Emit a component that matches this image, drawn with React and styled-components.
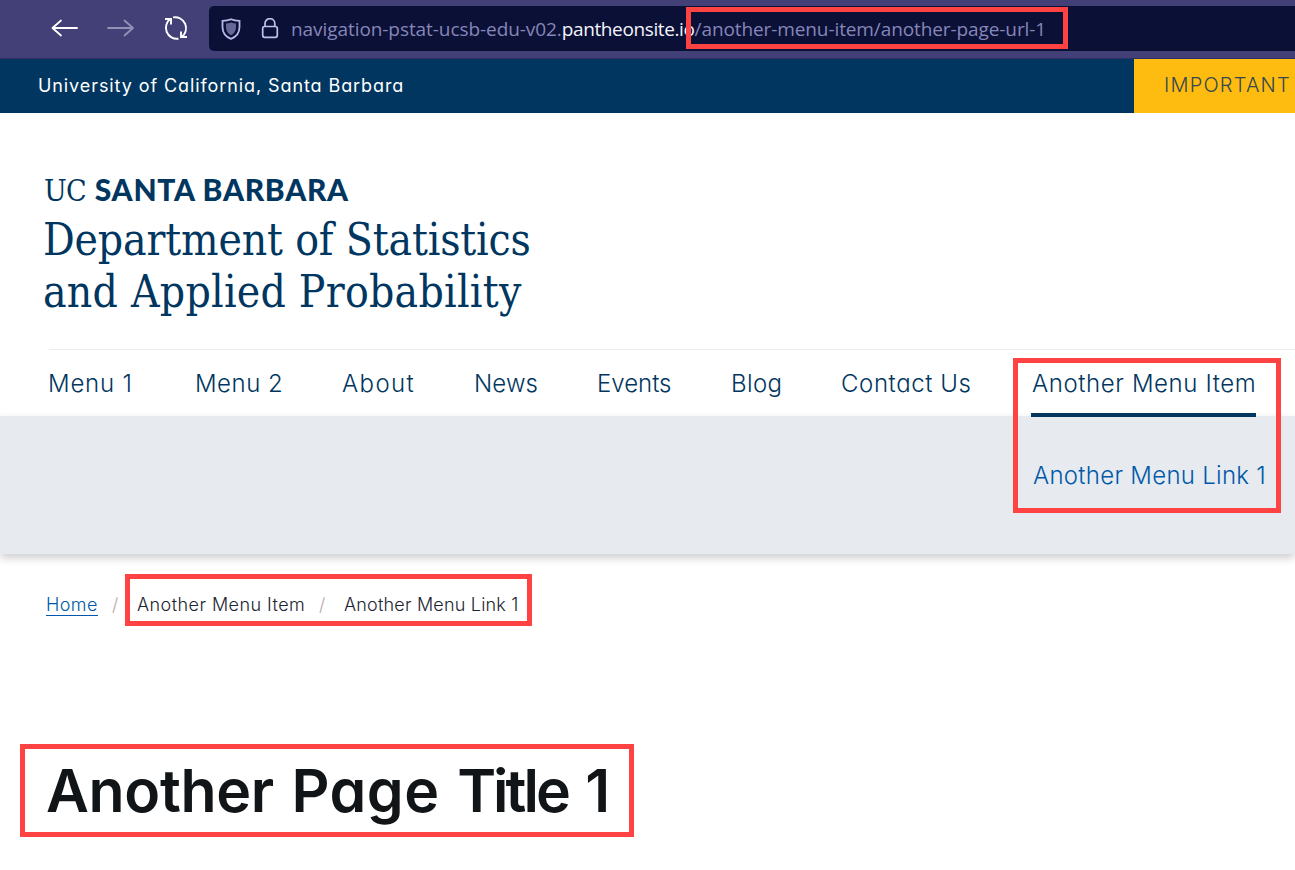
import React from "react";
import styled, { createGlobalStyle } from "styled-components";

const navy = "#003660";

const GlobalStyle = createGlobalStyle`
  * { box-sizing: border-box; }
  body {
    margin: 0;
    background: #fff;
    font-family: Inter, "Liberation Sans", sans-serif;
    font-feature-settings: "cv11";
    font-weight: 300;
    color: ${navy};
    overflow: hidden;
  }
  a { color: inherit; text-decoration: none; }
`;

const Page = styled.div`
  position: relative;
  width: 1295px;
  height: 870px;
  overflow: hidden;
`;

const BrowserBar = styled.div`
  display: flex;
  height: 59px;
  padding: 6px 0 0 51px;
  background: #424077;
  border-bottom: 1px solid #322f68;
`;

const Controls = styled.div`
  display: flex;
  width: 158px;
  height: 44px;
  align-items: center;
  gap: 28px;
  flex: none;
`;

const AddressBar = styled.div`
  display: flex;
  flex: 1;
  align-items: center;
  height: 45px;
  padding-left: 12px;
  background: #0b1036;
  border-radius: 5px 0 0 5px;
  svg { flex: none; }
`;

const Url = styled.div`
  display: flex;
  margin-left: 11px;
  font: 400 19px/28px "Open Sans", "Noto Sans", sans-serif;
  white-space: nowrap;
  color: #8686b9;
`;

const UrlPart = styled.span`
  color: ${(p) => (p.$host ? "#f4f4fc" : "inherit")};
  letter-spacing: ${(p) => p.$spacing || "0"};
`;

const CampusBar = styled.div`
  display: flex;
  justify-content: space-between;
  height: 54px;
  padding-left: 38px;
  background: ${navy};
`;

const CampusName = styled.a`
  font-size: 18px;
  font-weight: 400;
  line-height: 53px;
  letter-spacing: 0.91px;
  color: #fff;
`;

const Notice = styled.div`
  width: 161px;
  padding-left: 30px;
  background: #febc11;
  color: #34474e;
  font-size: 20px;
  line-height: 52px;
  letter-spacing: 1.2px;
  white-space: nowrap;
`;

const Masthead = styled.header`
  height: 236px;
  padding: 60px 0 0 43px;
`;

const Campus = styled.div`
  display: flex;
  align-items: baseline;
  gap: 9px;
  height: 41px;
  padding-left: 1px;
  line-height: 32px;
  font-family: "DejaVu Serif Condensed", "DejaVu Serif", serif;
  font-size: 30px;
  font-weight: 400;
  letter-spacing: -0.8px;
`;

const CampusStrong = styled.strong`
  font-family: Lato, sans-serif;
  font-weight: 900;
  letter-spacing: 0.72px;
`;

const Department = styled.div`
  font: 400 44px/52px "DejaVu Serif Condensed", "DejaVu Serif", serif;
  white-space: nowrap;
`;

const DepartmentLine = styled.div`
  letter-spacing: ${(p) => p.$spacing};
`;

const Nav = styled.nav`
  display: grid;
  grid-template-columns: 147px 147px 132px 123px 134px 110px 189px 225px;
  height: 67px;
  margin-left: 49px;
  border-top: 1px solid #ececee;
`;

const NavItem = styled.a`
  position: relative;
  margin-left: -1px;
  font-size: 24px;
  line-height: 68px;
  letter-spacing: ${(p) => p.$spacing}px;
  white-space: nowrap;
  ${(p) =>
    p.$active &&
    `margin-left: 0;
    padding-left: 1px;
    &::after {
      content: "";
      position: absolute;
      z-index: 1;
      left: 0;
      top: 63px;
      width: 225px;
      height: 4px;
      background: ${navy};
    }`}
`;

const SubMenu = styled.div`
  height: 138px;
  padding: 43px 0 0 1033px;
  background: #e7ebf0;
  border-radius: 0 0 4px 4px;
  box-shadow: 0 4px 8px rgba(0, 0, 0, 0.2);
`;

const SubLink = styled.a`
  font-size: 24px;
  line-height: 34px;
  letter-spacing: 0.28px;
  white-space: nowrap;
  color: #0059a8;
`;

const Breadcrumb = styled.div`
  display: flex;
  height: 190px;
  padding: 38px 0 0 46px;
  font-size: 18px;
  line-height: 25px;
  white-space: nowrap;
  color: #1b2530;
`;

const HomeLink = styled.a`
  width: 52px;
  height: 24px;
  border-bottom: 1px solid #0059a8;
  letter-spacing: 0.4px;
  color: #0059a8;
`;

const Slash = styled.span`
  width: 39px;
  padding-left: 14px;
  color: #b5aaa8;
`;

const Crumb = styled.span`
  width: ${(p) => p.$width}px;
  letter-spacing: ${(p) => p.$spacing}px;
`;

const Title = styled.h1`
  margin: 0;
  padding-left: 46px;
  font-size: 59px;
  font-weight: 600;
  line-height: 94px;
  letter-spacing: -0.35px;
  word-spacing: 3px;
  color: #111518;
`;

const TitleWord = styled.span`
  letter-spacing: ${(p) => p.$spacing}px;
`;

const Highlight = styled.div`
  position: absolute;
  z-index: 2;
  left: ${(p) => p.$x}px;
  top: ${(p) => p.$y}px;
  width: ${(p) => p.$w}px;
  height: ${(p) => p.$h}px;
  border: 5px solid #ff4343;
`;

const menu = [
  ["Menu 1", 0.8],
  ["Menu 2", 0.5],
  ["About", 1.4],
  ["News", 0.1],
  ["Events", 0],
  ["Blog", 0.4],
  ["Contact Us", 0.6],
  ["Another Menu Item", 0.6],
];

const marks = [
  [686, 7, 382, 42],
  [1013, 358, 268, 155],
  [125, 574, 407, 52],
  [20, 744, 614, 93],
];

const Arrow = ({ forward }) => (
  <svg width="28" height="22" viewBox="0 0 28 22" fill="none" stroke={forward ? "#9391b6" : "#fff"} strokeWidth="1.8" strokeLinecap="round" strokeLinejoin="round">
    <path d={forward ? "M1 11H26M17.5 3.5L26 11L17.5 18.5" : "M26 11H1.5M10 3.5L1.5 11L10 18.5"} />
  </svg>
);

const Reload = () => (
  <svg width="26" height="26" viewBox="0 0 26 26" fill="none" stroke="#fff" strokeWidth="1.9">
    <path d="M10 2.4A11 11 0 0 1 18.4 22.2M15.5 23.7A11 11 0 0 1 7.6 3.8" />
    <path d="M2 4H8V9.5M24 22H18V16.5" />
  </svg>
);

const Shield = () => (
  <svg width="20" height="22" viewBox="0 0 20 22">
    <path d="M10 1.2C12.5 2.3 15.5 2.7 18.5 2.8V9C18.5 14.5 15.5 18.7 10 20.8C4.5 18.7 1.5 14.5 1.5 9V2.8C4.5 2.7 7.5 2.3 10 1.2Z" fill="none" stroke="#b9b9ea" strokeWidth="1.8" />
    <path d="M10 4.5C11.5 5.1 13.5 5.5 15 5.6V9C15 13 13 15.8 10 17.2C7 15.8 5 13 5 9V5.6C6.5 5.5 8.5 5.1 10 4.5Z" fill="#686898" />
  </svg>
);

const Lock = () => (
  <svg width="39" height="22" viewBox="0 0 39 22" fill="none" stroke="#c0c0ef" strokeWidth="1.7">
    <rect x="21.7" y="8.5" width="14.6" height="10.8" rx="2" />
    <path d="M24 8.5V5.5A4.9 4.9 0 0 1 33.8 5.5V8.5" />
  </svg>
);

export default function App() {
  return (
    <Page>
      <GlobalStyle />
      <BrowserBar>
        <Controls>
          <Arrow />
          <Arrow forward />
          <Reload />
        </Controls>
        <AddressBar>
          <Shield />
          <Lock />
          <Url>
            <UrlPart $spacing="-0.07px">navigation-pstat-ucsb-edu-v02.</UrlPart>
            <UrlPart $host $spacing="-0.38px">pantheonsite.io</UrlPart>
            <UrlPart $spacing="-0.1px">/another-menu-item/another-page-url-1</UrlPart>
          </Url>
        </AddressBar>
      </BrowserBar>
      <CampusBar>
        <CampusName>University of California, Santa Barbara</CampusName>
        <Notice>IMPORTANT</Notice>
      </CampusBar>
      <Masthead>
        <Campus>
          UC <CampusStrong>SANTA BARBARA</CampusStrong>
        </Campus>
        <Department>
          <DepartmentLine $spacing="-0.15px">Department of Statistics</DepartmentLine>
          <DepartmentLine $spacing="0.25px">and Applied Probability</DepartmentLine>
        </Department>
      </Masthead>
      <Nav>
        {menu.map(([label, spacing], i) => (
          <NavItem key={label} $spacing={spacing} $active={i === menu.length - 1}>
            {label}
          </NavItem>
        ))}
      </Nav>
      <SubMenu>
        <SubLink>Another Menu Link 1</SubLink>
      </SubMenu>
      <Breadcrumb>
        <HomeLink>Home</HomeLink>
        <Slash>/</Slash>
        <Crumb $width={168} $spacing={0.45}>Another Menu Item</Crumb>
        <Slash>/</Slash>
        <Crumb $width={176} $spacing={0.2}>Another Menu Link 1</Crumb>
      </Breadcrumb>
      <Title>
        <TitleWord $spacing={-0.35}>Another</TitleWord> <TitleWord $spacing={0.5}>Page</TitleWord>{" "}
        <TitleWord $spacing={-3}>Title</TitleWord> 1
      </Title>
      {marks.map(([x, y, w, h]) => (
        <Highlight key={y} $x={x} $y={y} $w={w} $h={h} />
      ))}
    </Page>
  );
}
